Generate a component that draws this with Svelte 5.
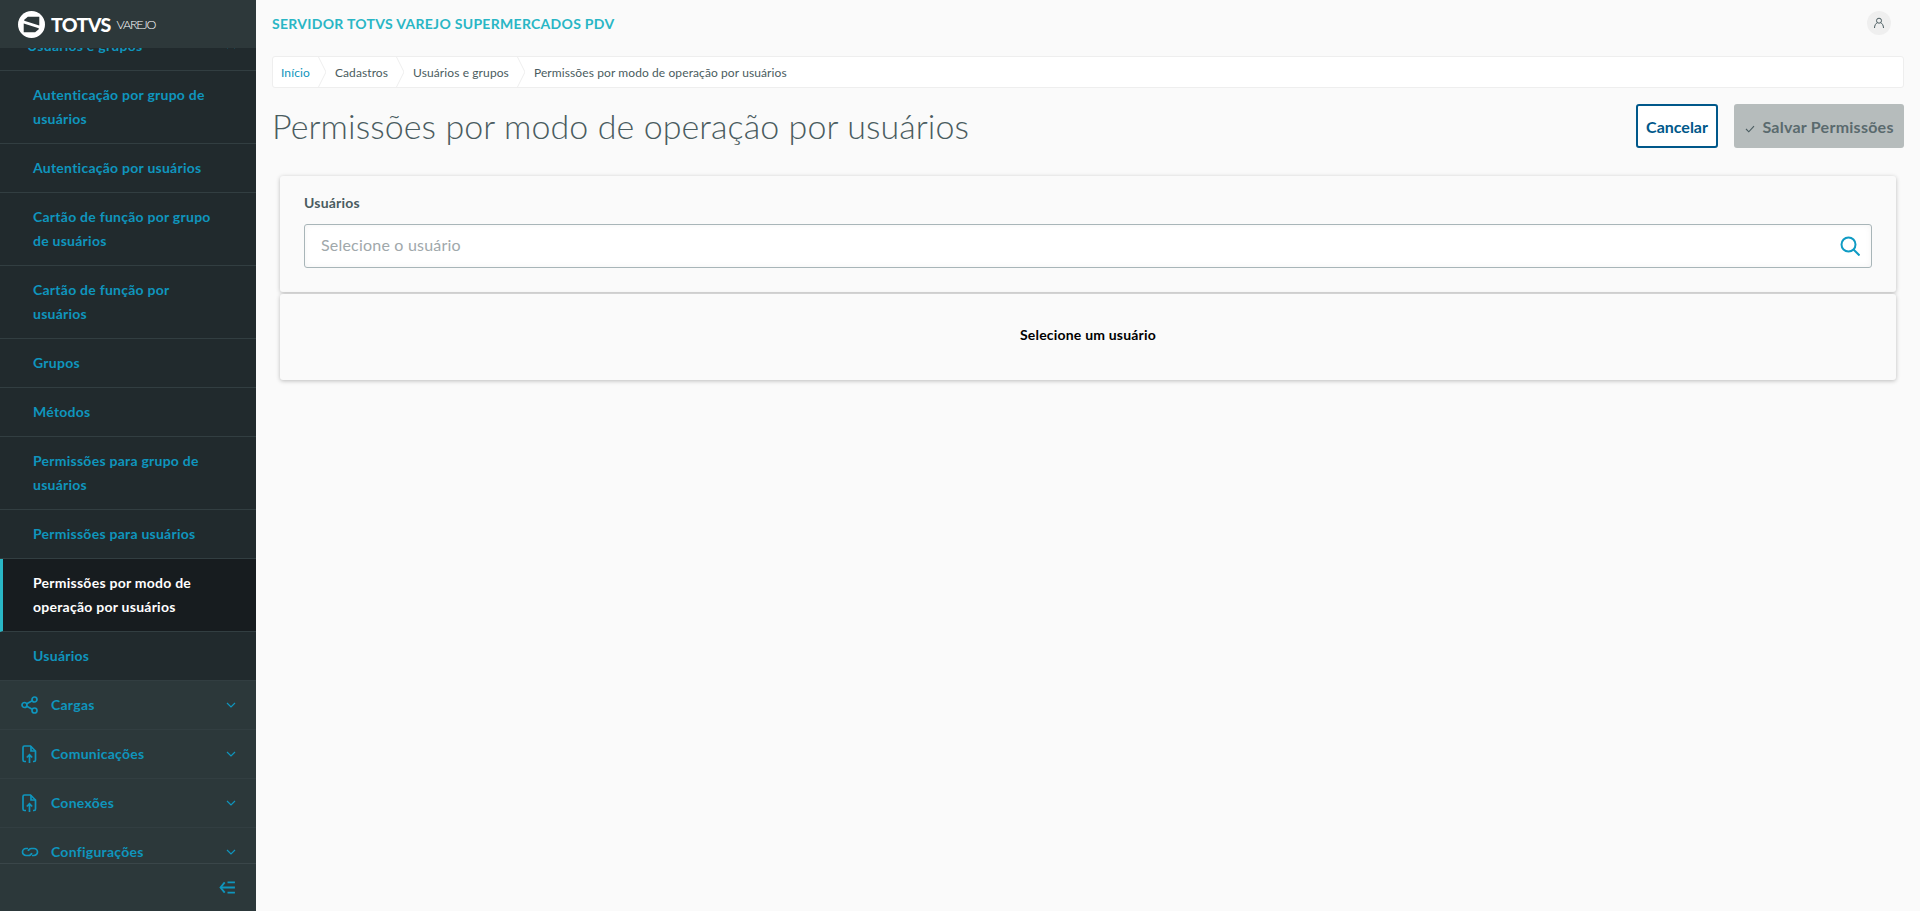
<script lang="ts">
  const subItems = [
    { name: 'Autenticação por grupo de usuários' },
    { name: 'Autenticação por usuários' },
    { name: 'Cartão de função por grupo de usuários' },
    { name: 'Cartão de função por usuários' },
    { name: 'Grupos' },
    { name: 'Métodos' },
    { name: 'Permissões para grupo de usuários' },
    { name: 'Permissões para usuários' },
    { name: 'Permissões por modo de operação por usuários', active: true },
    { name: 'Usuários' },
  ];

  const groups = [
    { name: 'Cargas', icon: 'share' },
    { name: 'Comunicações', icon: 'upload' },
    { name: 'Conexões', icon: 'upload' },
    { name: 'Configurações', icon: 'link' },
  ];

  const crumbs = ['Início', 'Cadastros', 'Usuários e grupos', 'Permissões por modo de operação por usuários'];
</script>

<div class="app">
  <aside class="sidebar">
    <div class="brand">
      <svg class="brand-mark" viewBox="0 0 26 26" width="27" height="27">
        <circle cx="13" cy="13" r="13" fill="#fff" />
        <path d="M6 8.500 9.500 5.500H20.500V14L6 9.500zM20 17.500 16.500 20.500H5.500V12L20 16.500z" fill="#2d383a" />
      </svg>
      <span class="brand-name">TOTVS</span>
      <span class="brand-sub">VAREJO</span>
    </div>

    <nav class="menu">
      <div class="menu-inner">
        <div class="row parent">
          <span>Usuários e grupos</span>
          <svg class="chevron" viewBox="0 0 10 6" width="10" height="6"><path d="M1 5l4-4 4 4" /></svg>
        </div>
        {#each subItems as item}
          <a class="row sub" class:active={item.active} href="#top">{item.name}</a>
        {/each}
        {#each groups as group}
          <div class="row group">
            <svg class="group-icon" viewBox="0 0 18 18" width="18" height="18">
              {#if group.icon === 'share'}
                <circle cx="3.500" cy="9" r="2.500" />
                <circle cx="13.500" cy="3.500" r="2.500" />
                <circle cx="13.500" cy="14.500" r="2.500" />
                <path d="M5.700 7.800l5.600-3.100M5.700 10.200l5.600 3.100" />
              {:else if group.icon === 'upload'}
                <path d="M5 16.500H3.500a1.500 1.500 0 0 1-1.500-1.500V2.500A1.500 1.500 0 0 1 3.500 1h6l5 5v9a1.500 1.500 0 0 1-1.500 1.500h-1" />
                <path d="M10 1v5h4.500M8.500 18v-8M5.800 12.500l2.700-2.700 2.700 2.700" />
              {:else}
                <path d="M7 5.500H5a3.500 3.500 0 0 0 0 7h2.500a3.500 3.500 0 0 0 3.300-2.500" />
                <path d="M11 12.500h2a3.500 3.500 0 0 0 0-7h-2.500a3.500 3.500 0 0 0-3.300 2.500" />
              {/if}
            </svg>
            <span>{group.name}</span>
            <svg class="chevron" viewBox="0 0 10 6" width="10" height="6"><path d="M1 1l4 4 4-4" /></svg>
          </div>
        {/each}
      </div>
    </nav>

    <div class="collapse">
      <svg viewBox="0 0 18 14" width="17" height="13">
        <path d="M6 1.500 1.500 7 6 12.500" />
        <path d="M2 7h15M9 1.500h8M9 12.500h8" />
      </svg>
    </div>
  </aside>

  <main class="main">
    <header class="topbar">
      <span class="server">SERVIDOR TOTVS VAREJO SUPERMERCADOS PDV</span>
      <span class="avatar">
        <svg viewBox="0 0 12 12" width="12" height="12">
          <circle cx="6" cy="3.700" r="2.500" />
          <path d="M1.500 11c0-2.800 1.500-4.800 2.800-5.200M10.500 11c0-2.800-1.500-4.800-2.800-5.200" />
        </svg>
      </span>
    </header>

    <div class="breadcrumb">
      {#each crumbs as crumb, i}
        <span class="crumb" class:home={i === 0}>{crumb}</span>
        {#if i < crumbs.length - 1}
          <svg class="crumb-sep" viewBox="0 0 8 32" width="8" height="32"><path d="M0 0l8 16-8 16" /></svg>
        {/if}
      {/each}
    </div>

    <div class="title-row">
      <h1>Permissões por modo de operação por usuários</h1>
      <div class="actions">
        <button class="btn-cancel">Cancelar</button>
        <button class="btn-save" disabled>
          <svg viewBox="0 0 12 10" width="10" height="8"><path d="M1 5l3.500 3.500L11 1.500" /></svg>
          Salvar Permissões
        </button>
      </div>
    </div>

    <section class="cards">
      <div class="card filter">
        <label for="user">Usuários</label>
        <div class="input-wrap">
          <input id="user" placeholder="Selecione o usuário" />
          <svg viewBox="0 0 20 20" width="20" height="20">
            <circle cx="8.500" cy="8.500" r="7" />
            <path d="M13.500 13.500 19.500 19.500" />
          </svg>
        </div>
      </div>
      <div class="card empty">Selecione um usuário</div>
    </section>
  </main>
</div>

<style>
  :global(body) {
    margin: 0;
    font-family: Lato, 'Noto Sans', sans-serif;
    background: #fafafa;
    overflow: hidden;
  }

  .app {
    display: flex;
    height: 911px;
  }

  .sidebar {
    display: flex;
    flex-direction: column;
    flex-shrink: 0;
    width: 256px;
    height: 100%;
    background: #212a2d;
  }

  .brand {
    display: flex;
    align-items: center;
    flex-shrink: 0;
    height: 48px;
    padding-left: 18px;
    box-sizing: border-box;
    background: #2d383a;
    color: #fff;
    position: relative;
    z-index: 1;
  }

  .brand-name {
    margin-left: 6px;
    font-size: 19.500px;
    font-weight: 900;
    letter-spacing: -0.6px;
  }

  .brand-sub {
    margin-left: 6px;
    font-size: 12.500px;
    font-weight: 300;
    letter-spacing: -1.200px;
  }

  .menu {
    flex: 1;
    overflow: hidden;
  }

  .menu-inner {
    margin-top: -26px;
  }

  .row {
    display: block;
    box-sizing: border-box;
    padding: 12px 36px 12px 33px;
    border-bottom: 1px solid #323e41;
    color: #0f95bd;
    font-size: 14px;
    font-weight: 700;
    letter-spacing: 0.25px;
    line-height: 24px;
    text-decoration: none;
  }

  .parent {
    display: flex;
    justify-content: space-between;
    padding-left: 27px;
    padding-right: 20px;
    align-items: center;
  }

  .sub {
    min-height: 49px;
  }

  .sub.active {
    padding-left: 30px;
    border-left: 3px solid #29b6c5;
    background: #171c1f;
    color: #fff;
  }

  .group {
    display: flex;
    align-items: center;
    height: 49px;
    padding-left: 21px;
    padding-right: 20px;
    background: #2c383a;
  }

  .group span {
    flex: 1;
    margin-left: 12px;
  }

  .group-icon {
    fill: none;
    stroke: #0f95bd;
    stroke-width: 1.700;
  }

  .chevron {
    fill: none;
    stroke: #0f95bd;
    stroke-width: 1.200;
  }

  .collapse {
    display: flex;
    align-items: center;
    justify-content: flex-end;
    flex-shrink: 0;
    height: 48px;
    padding-right: 20px;
    box-sizing: border-box;
    border-top: 1px solid #3a4649;
    background: #2c383a;
  }

  .collapse svg {
    fill: none;
    stroke: #0f95bd;
    stroke-width: 2;
  }

  .main {
    flex: 1;
    min-width: 0;
    padding: 0 16px;
  }

  .topbar {
    display: flex;
    align-items: center;
    justify-content: space-between;
    height: 46px;
    padding-right: 13px;
  }

  .server {
    color: #29b6c5;
    font-size: 14px;
    font-weight: 700;
    letter-spacing: 0.3px;
  }

  .avatar {
    display: flex;
    align-items: center;
    justify-content: center;
    width: 24px;
    height: 24px;
    border-radius: 50%;
    background: #efefef;
  }

  .avatar svg {
    fill: none;
    stroke: #4a5c60;
    stroke-width: 1;
  }

  .breadcrumb {
    display: flex;
    align-items: center;
    height: 32px;
    margin-top: 10px;
    padding-left: 8px;
    box-sizing: border-box;
    background: #fff;
    border: 1px solid #eee;
    border-radius: 3px;
    overflow: hidden;
    color: #4a5c60;
    font-size: 12px;
    letter-spacing: 0.1px;
  }

  .crumb {
    padding-right: 8px;
  }

  .crumb.home {
    color: #0f95bd;
  }

  .crumb-sep {
    flex-shrink: 0;
    margin-right: 9px;
    fill: none;
    stroke: #eee;
  }

  .title-row {
    display: flex;
    align-items: flex-start;
    justify-content: space-between;
    margin-top: 16px;
  }

  h1 {
    margin: 0;
    color: #4a5c60;
    font-size: 34px;
    font-weight: 300;
    letter-spacing: 0.08px;
    line-height: 44px;
  }

  .actions {
    display: flex;
    gap: 16px;
  }

  .actions button {
    height: 44px;
    border-radius: 3px;
    font-family: inherit;
    font-size: 16px;
    font-weight: 700;
  }

  .btn-cancel {
    width: 82px;
    padding: 0;
    background: #fff;
    border: 2px solid #00588a;
    color: #00588a;
  }

  .btn-save {
    width: 170px;
    padding: 0 0 0 1px;
    background: #b6bcbc;
    border: none;
    color: #5a6a6e;
    letter-spacing: 0.25px;
  }

  .btn-save svg {
    margin-right: 3px;
    fill: none;
    stroke: #4a5c60;
    stroke-width: 1.400;
  }

  .cards {
    display: flex;
    flex-direction: column;
    gap: 2px;
    margin: 28px 8px 0;
  }

  .card {
    box-sizing: border-box;
    background: #fafafa;
    border-radius: 3px;
    box-shadow: 0 1px 4px rgba(0, 0, 0, 0.25);
  }

  .filter {
    height: 116px;
    padding: 15px 24px;
  }

  .filter label {
    display: block;
    color: #4a5c60;
    font-size: 14px;
    font-weight: 700;
    letter-spacing: 0.2px;
    line-height: 24px;
  }

  .input-wrap {
    display: flex;
    align-items: center;
    height: 44px;
    margin-top: 9px;
    padding: 0 11px 0 16px;
    box-sizing: border-box;
    background: #fff;
    border: 1px solid #a8b5b8;
    border-radius: 3px;
    box-shadow: inset 0 0 6px rgba(0, 0, 0, 0.05);
  }

  .input-wrap input {
    flex: 1;
    padding: 0 0 4px;
    border: none;
    outline: none;
    background: none;
    font-family: inherit;
    font-size: 16px;
    letter-spacing: 0.2px;
  }

  .input-wrap input::placeholder {
    color: #a0a8ab;
    opacity: 1;
  }

  .input-wrap svg {
    fill: none;
    stroke: #0f9bc4;
    stroke-width: 2;
  }

  .empty {
    height: 86px;
    padding-top: 29px;
    color: #000;
    font-size: 14px;
    font-weight: 700;
    letter-spacing: 0.2px;
    line-height: 24px;
    text-align: center;
  }
</style>
